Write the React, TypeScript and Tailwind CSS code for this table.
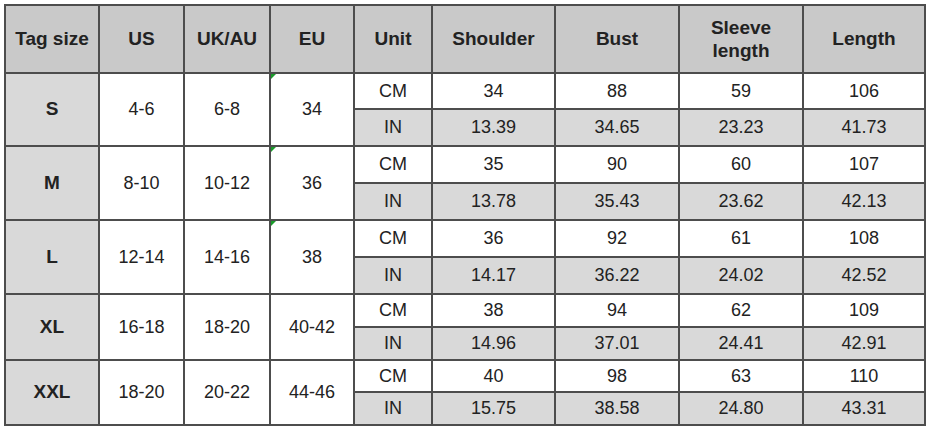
import { Fragment } from 'react';

const rows = [
  { tag: 'S', us: '4-6', uk: '6-8', eu: '34', cm: ['34', '88', '59', '106'], inch: ['13.39', '34.65', '23.23', '41.73'], h: ['h-[36px]', 'h-[37px]'], mark: true },
  { tag: 'M', us: '8-10', uk: '10-12', eu: '36', cm: ['35', '90', '60', '107'], inch: ['13.78', '35.43', '23.62', '42.13'], h: ['h-[37px]', 'h-[37px]'], mark: true },
  { tag: 'L', us: '12-14', uk: '14-16', eu: '38', cm: ['36', '92', '61', '108'], inch: ['14.17', '36.22', '24.02', '42.52'], h: ['h-[37px]', 'h-[37px]'], mark: true },
  { tag: 'XL', us: '16-18', uk: '18-20', eu: '40-42', cm: ['38', '94', '62', '109'], inch: ['14.96', '37.01', '24.41', '42.91'], h: ['h-[33px]', 'h-[33px]'], mark: false },
  { tag: 'XXL', us: '18-20', uk: '20-22', eu: '44-46', cm: ['40', '98', '63', '110'], inch: ['15.75', '38.58', '24.80', '43.31'], h: ['h-[32px]', 'h-[33px]'], mark: false },
];

const cell = 'border-2 border-[#4d4d4d] text-center align-middle p-0';

export default function App() {
  return (
    <div className="w-[928px] h-[430px] bg-white pt-[4px] pl-[4px]" style={{ fontFamily: '"Liberation Sans", Arial, sans-serif' }}>
      <table className="table-fixed border-collapse w-[920px] text-[18px] text-[#222]">
        <colgroup>
          <col className="w-[94px]" />
          <col className="w-[85px]" />
          <col className="w-[86px]" />
          <col className="w-[84px]" />
          <col className="w-[78px]" />
          <col className="w-[123px]" />
          <col className="w-[124px]" />
          <col className="w-[124px]" />
          <col className="w-[122px]" />
        </colgroup>
        <thead>
          <tr className="h-[68px] bg-[#c9c9c9] font-bold text-[19px]">
            <th className={cell}>Tag size</th>
            <th className={cell}>US</th>
            <th className={cell}>UK/AU</th>
            <th className={cell}>EU</th>
            <th className={cell}>Unit</th>
            <th className={cell}>Shoulder</th>
            <th className={cell}>Bust</th>
            <th className={`${cell} leading-[23px]`}>Sleeve<br />length</th>
            <th className={cell}>Length</th>
          </tr>
        </thead>
        <tbody>
          {rows.map((r) => (
            <Fragment key={r.tag}>
              <tr className={r.h[0]}>
                <td rowSpan={2} className={`${cell} bg-[#d9d9d9] font-bold text-[19px]`}>{r.tag}</td>
                <td rowSpan={2} className={`${cell} bg-white`}>{r.us}</td>
                <td rowSpan={2} className={`${cell} bg-white`}>{r.uk}</td>
                <td rowSpan={2} className={`${cell} bg-white relative`}>
                  {r.mark && (
                    <span className="absolute left-0 top-0 w-0 h-0 border-t-[5px] border-r-[5px] border-t-[#1a9a2a] border-r-transparent" />
                  )}
                  {r.eu}
                </td>
                <td className={`${cell} bg-white`}>CM</td>
                {r.cm.map((v, i) => (
                  <td key={i} className={`${cell} bg-white`}>{v}</td>
                ))}
              </tr>
              <tr className={`${r.h[1]} bg-[#d9d9d9]`}>
                <td className={cell}>IN</td>
                {r.inch.map((v, i) => (
                  <td key={i} className={cell}>{v}</td>
                ))}
              </tr>
            </Fragment>
          ))}
        </tbody>
      </table>
    </div>
  );
}
